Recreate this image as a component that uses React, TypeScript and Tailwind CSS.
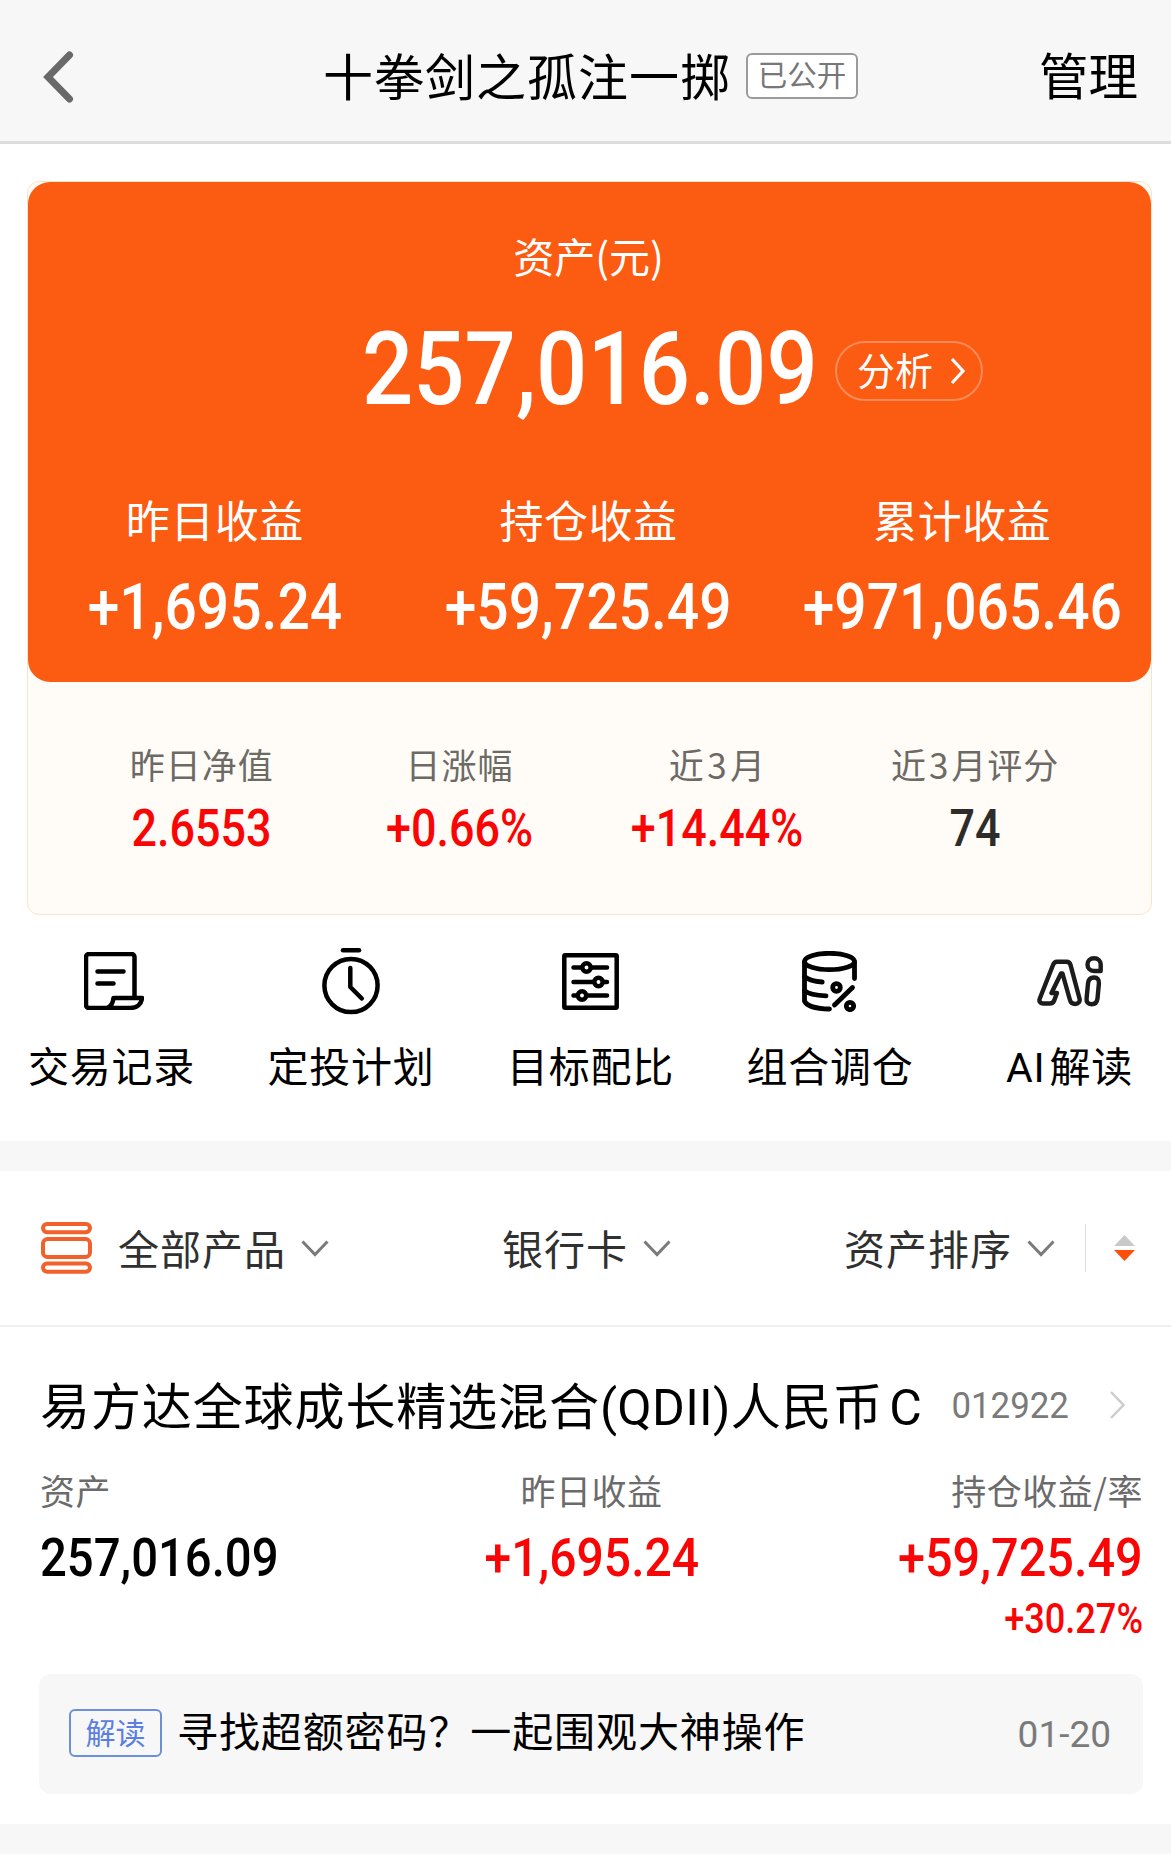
import type { ReactNode } from 'react';
import clsx from 'clsx';

const actions = [
  { label: '交易记录', icon: <RecordIcon /> },
  { label: '定投计划', icon: <TimerIcon /> },
  { label: '目标配比', icon: <SlidersIcon /> },
  { label: '组合调仓', icon: <RebalanceIcon /> },
  { label: <><Latin className="mr-1">AI</Latin>解读</>, icon: <AiIcon /> },
];

const profits = [
  { label: '昨日收益', value: '+1,695.24' },
  { label: '持仓收益', value: '+59,725.49' },
  { label: '累计收益', value: '+971,065.46' },
];

const stats = [
  { label: '昨日净值', value: '2.6553', color: 'text-[#fa0505]' },
  { label: '日涨幅', value: '+0.66%', color: 'text-[#fa0505]' },
  { label: <>近<span className="mx-[2.5px]">3</span>月</>, value: '+14.44%', color: 'text-[#fa0505]' },
  { label: <>近<span className="mx-[2px]">3</span>月评分</>, value: '74', color: 'text-[#2e2c29]' },
];

function RecordIcon() {
  return (
    <svg className="ml-1" width="60" height="58" viewBox="0 0 60 58" fill="none" stroke="currentColor" strokeWidth="4.5" strokeLinecap="round" strokeLinejoin="round">
      <path d="M50.5 45V5a3 3 0 0 0-3-3H5a3 3 0 0 0-3 3v48a3 3 0 0 0 3 3h41c7 0 11.500-4 12-10H29.500c-.5 5-2.500 8.500-6.500 10" />
      <path d="M13.500 19.500h26M13.500 31.500h16" />
    </svg>
  );
}

function TimerIcon() {
  return (
    <svg width="58" height="67" viewBox="0 0 58 67" fill="none" stroke="currentColor" strokeWidth="4.5" strokeLinecap="round" strokeLinejoin="round">
      <path d="M21 2.300h16" />
      <circle cx="29" cy="37.500" r="26.600" />
      <path d="M28.300 20v19l11.500 11.500" />
    </svg>
  );
}

function SlidersIcon() {
  return (
    <svg width="57" height="57" viewBox="0 0 57 57" fill="none" stroke="currentColor" strokeWidth="4.5" strokeLinecap="round" strokeLinejoin="round">
      <rect x="2.300" y="2.300" width="52.400" height="52.400" rx="1" />
      <path d="M11.500 14.500h33.500M11.500 29h33.500M11.500 42.500h33.500" />
      <g fill="white">
        <circle cx="24.500" cy="14.500" r="4.200" />
        <circle cx="36.500" cy="29" r="4.200" />
        <circle cx="20" cy="42.500" r="4.200" />
      </g>
    </svg>
  );
}

function RebalanceIcon() {
  return (
    <svg width="56" height="61" viewBox="0 0 56 61" fill="none" stroke="currentColor" strokeWidth="4.8" strokeLinecap="round" strokeLinejoin="round">
      <ellipse cx="27.500" cy="10.500" rx="25" ry="8.200" />
      <path d="M52.500 11v16.500M2.500 11v39c2 5 12 7.800 25 8" />
      <path d="M2.500 25.500c4 3.500 10 5 17.700 5.500M2.500 39.500c4 3.500 12 5 21.500 5.300" />
      <circle cx="34.500" cy="36.500" r="3.800" />
      <circle cx="48" cy="55" r="3.700" />
      <path d="M50.500 36.500 32.500 54" />
    </svg>
  );
}

function AiIcon() {
  return (
    <svg width="66" height="51" viewBox="0 0 66 51" fill="none" stroke="#1c1c1c" strokeWidth="4.4" strokeLinecap="round" strokeLinejoin="round">
      <path d="M20 5.700h9.500c2 0 3.500 1.200 4 3.200l9 33.600c.8 3.300-1.200 5.500-4.200 5.500-3.500 0-4.800-1.500-5.500-4.500L25.500 17.500h-1.500l-9.500 19.500h5.500l-2.800 7.500c-.9 2-2.200 3-4.200 3H6c-3.200 0-4.200-2.500-3.200-5l13.200-33.500c.8-2.300 2-3.300 4-3.300Z" />
      <path d="M57 2.300c4 0 6.700 2.700 6.700 6v6.700H57c-4 0-6.500-3-6.500-6.500s2.500-6.200 6.500-6.200ZM57 21.500c3.500 0 5.300 2.300 4.900 6l-1.400 15c-.4 3.500-2.500 5.800-6 5.800s-5.300-2.300-4.900-5.800l1.400-15c.4-3.700 2.500-6 6-6Z" />
    </svg>
  );
}

function ListIcon() {
  return (
    <svg width="51" height="52" viewBox="0 0 51 52" fill="none" stroke="#f0622a" strokeWidth="4">
      <rect x="2" y="2" width="47" height="8.200" rx="4.100" />
      <rect x="2" y="17" width="47" height="18" rx="4.500" />
      <rect x="2" y="41.500" width="47" height="8.200" rx="4.100" />
    </svg>
  );
}

function ChevronDown() {
  return (
    <svg width="28" height="17" viewBox="0 0 28 17" fill="none" stroke="#7a7a7a" strokeWidth="3">
      <path d="M1.500 1.500 14 14.500l12.500-13" />
    </svg>
  );
}

// DIN-like figures: Roboto, narrowed by the caller
function Num({ children, className }: { children: ReactNode; className?: string }) {
  return (
    <span className={clsx("block whitespace-nowrap font-['Roboto',sans-serif] leading-none", className)}>
      {children}
    </span>
  );
}

function Latin({ children, className }: { children: ReactNode; className?: string }) {
  return <span className={clsx("font-['Roboto',sans-serif]", className)}>{children}</span>;
}

function Filter({ label, className }: { label: string; className?: string }) {
  return (
    <div className={clsx('flex items-center gap-[15px] text-[41px] leading-none tracking-[1px] text-[#303030]', className)}>
      <span className="-mt-[2px]">{label}</span>
      <ChevronDown />
    </div>
  );
}

export default function App() {
  return (
    <main className="w-[1171px] h-[1854px] overflow-hidden bg-white text-black font-['Noto_Sans_CJK_SC',sans-serif]">
      <header className="flex h-36 items-center border-b-[3px] border-[#dcdedd] bg-[#f7f7f7] pt-[10px] pl-[43px] pr-[33px]">
        <svg className="mt-[2px]" width="31" height="52" viewBox="0 0 31 52" fill="none" stroke="#696969" strokeWidth="7" strokeLinecap="round">
          <path d="M26.500 4 5 26l21.500 22" />
        </svg>
        <h1 className="-mt-[4px] ml-[249px] text-[50px] leading-none tracking-[1px]">十拳剑之孤注一掷</h1>
        <span className="ml-[15px] flex h-[46px] w-28 items-center justify-center rounded-md border-2 border-[#9b9b9b] bg-white pb-[3px] text-[29.500px] leading-none text-[#777]">
          已公开
        </span>
        <span className="-mt-[4px] ml-auto text-[49.500px] leading-none">管理</span>
      </header>

      <section className="ml-[27px] mr-[19px] mt-[37px] h-[734px] rounded-xl border border-[#fbe3c8] bg-[#fffcf7]">
        <div className="flex h-[500px] flex-col rounded-[22px] bg-[#fc5b12] text-white">
          <p className="mt-[53px] pr-[2px] text-center text-[41px] leading-none">资产(元)</p>
          <div className="mt-[47px] flex h-[92px] items-center pl-[334px]">
            <Num className="w-[456px] origin-left scale-x-[.885] text-[102px] font-medium">257,016.09</Num>
            <span className="ml-[17px] mt-1 flex h-[60px] w-[148px] items-center rounded-full border-2 border-white/30 pl-[20px] text-[38px] leading-none">
              <span className="-mt-1">分析</span>
              <svg className="ml-[17px]" width="16" height="28" viewBox="0 0 16 28" fill="none" stroke="currentColor" strokeWidth="3.200">
                <path d="M2 2l11 12L2 26" />
              </svg>
            </span>
          </div>
          <div className="mt-[82px] grid grid-cols-3 pr-[2px] text-center">
            {profits.map((p) => (
              <div key={p.value} className="flex flex-col items-center">
                <span className="text-[44px] leading-none tracking-[.5px]">{p.label}</span>
                <Num className="mt-[35px] scale-x-[.89] text-[64px] font-medium">{p.value}</Num>
              </div>
            ))}
          </div>
        </div>
        <div className="grid grid-cols-4 pl-[45px] pr-[47px] pt-[64px] text-center">
          {stats.map((s) => (
            <div key={s.value} className="flex flex-col items-center">
              <span className="text-[35px] leading-none tracking-[1px] text-[#6d6a66]">{s.label}</span>
              <Num className={clsx('mt-[22px] scale-x-[.88] text-[51px] font-medium', s.color)}>{s.value}</Num>
            </div>
          ))}
        </div>
      </section>

      <nav className="flex h-[226px] justify-between pl-[27px] pr-[17px] pt-[29px]">
        {actions.map((a, i) => (
          <div key={i} className="flex w-[169px] flex-col items-center">
            <span className="flex h-[74px] items-center">{a.icon}</span>
            <span className="mt-[26px] whitespace-nowrap text-[41px] leading-none tracking-[.8px]">{a.label}</span>
          </div>
        ))}
      </nav>

      <div className="h-[30px] bg-[#f7f7f7]" />

      <div className="flex h-[156px] items-center border-b-2 border-[#efefef] pl-[41px]">
        <ListIcon />
        <Filter label="全部产品" className="ml-[26px]" />
        <Filter label="银行卡" className="ml-[173px]" />
        <Filter label="资产排序" className="ml-[173px]" />
        <span className="ml-[30px] h-12 w-px bg-[#ddd]" />
        <svg className="ml-[28px]" width="21" height="27" viewBox="0 0 21 27">
          <path d="M0 11 10.500 0 21 11Z" fill="#c9c9c9" />
          <path d="M0 15 10.500 26 21 15Z" fill="#fc4f0c" />
        </svg>
      </div>

      <section className="pl-[40px] pr-7 pt-[51px]">
        <div className="flex items-center">
          <h2 className="h-[50px] whitespace-nowrap text-[50px] leading-[50px] tracking-[.9px]">
            易方达全球成长精选混合<Latin className="tracking-[.3px]">(QDII)</Latin>人民币<Latin className="ml-1.5">C</Latin>
          </h2>
          <Num className="ml-auto mt-[4px] origin-right scale-x-[.94] text-[37px] text-[#7a7a7a]">012922</Num>
          <svg className="ml-10 mr-[17px] mt-[4px]" width="17" height="28" viewBox="0 0 17 28" fill="none" stroke="#ccc" strokeWidth="2.500">
            <path d="M2 1l12.500 13L2 27" />
          </svg>
        </div>
        <div className="mt-[44px] grid grid-cols-3 text-[35px] leading-none tracking-[.5px] text-[#6b6b6b]">
          <span>资产</span>
          <span className="text-center">昨日收益</span>
          <span className="text-right">持仓收益/率</span>
        </div>
        <div className="mt-[24px] grid grid-cols-3 text-[54px] font-medium">
          <Num className="origin-left scale-x-[.875]">257,016.09</Num>
          <Num className="scale-x-[.89] text-center text-[#fa0505]">+1,695.24</Num>
          <Num className="origin-right scale-x-[.9] text-right text-[#fa0505]">+59,725.49</Num>
        </div>
        <Num className="mt-[13px] origin-right scale-x-[.86] text-right text-[42px] font-medium text-[#fa0505]">+30.27%</Num>
      </section>

      <div className="ml-[39px] mr-7 mt-[34px] flex h-[120px] items-center rounded-xl bg-[#f7f7f7] pl-[30px] pr-8">
        <span className="-mt-[2px] flex h-12 w-[93px] items-center justify-center rounded-md border-2 border-[#6b8fd8] pb-[5px] text-[30px] leading-none text-[#5b7fe0]">
          解读
        </span>
        <p className="-mt-[9px] ml-[15px] text-[41px] leading-none tracking-[.9px]">寻找超额密码？一起围观大神操作</p>
        <Num className="ml-auto text-[37px] text-[#7a7a7a]">01-20</Num>
      </div>

      <div className="mt-[30px] h-[30px] bg-[#f7f7f7]" />
    </main>
  );
}
